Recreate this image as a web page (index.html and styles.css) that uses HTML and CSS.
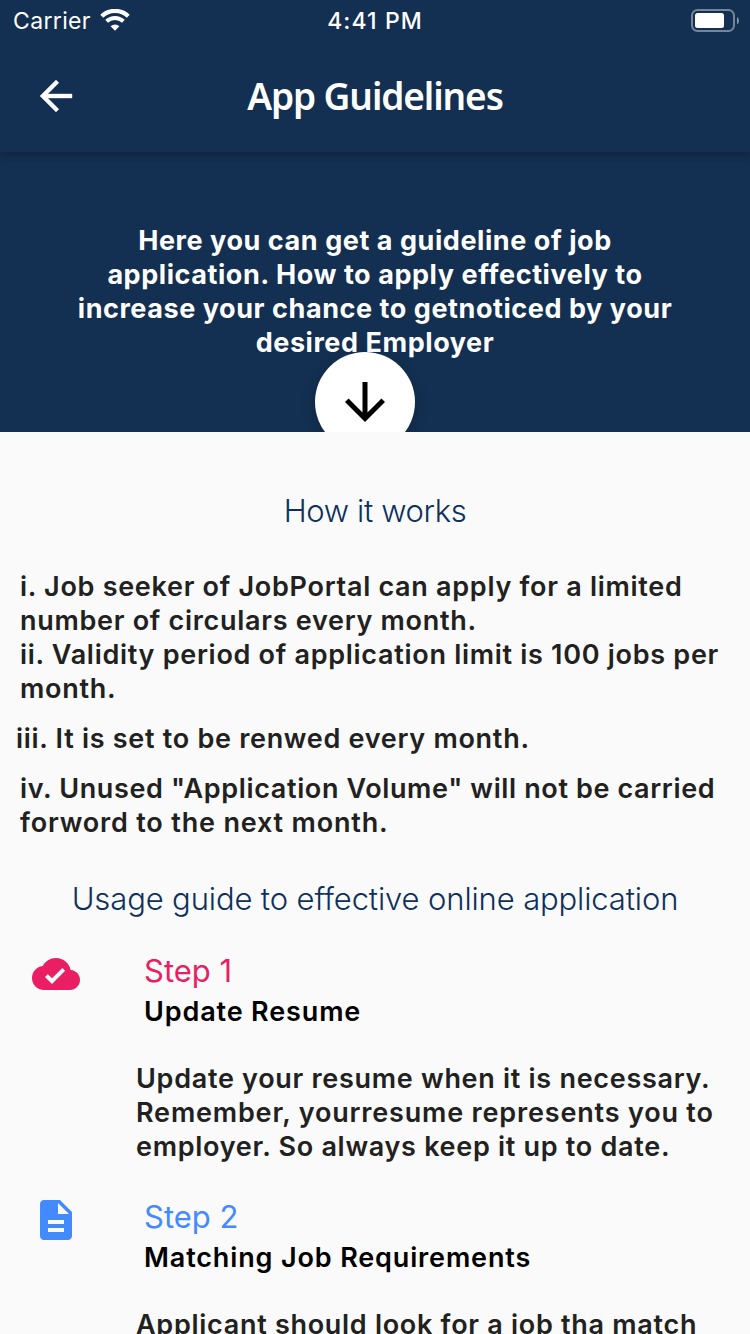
FILE: index.html
```html
<!DOCTYPE html>
<html lang="en">
<head>
<meta charset="utf-8">
<title>App Guidelines</title>
<link rel="stylesheet" href="styles.css">
</head>
<body>
<header class="top">
  <div class="status">
    <div class="carrier"><span>Carrier</span>
      <svg class="wifi" viewBox="0 0 30 22" fill="none" stroke="#fff"><path d="M1.7 7.2A19.3 19.3 0 0 1 28.3 7.2" stroke-width="4.2"/><path d="M6.600 12.3A12.3 12.3 0 0 1 23.4 12.3" stroke-width="4"/><path d="M15 21.7l-4.400-4.400a6.200 6.200 0 0 1 8.800 0z" fill="#fff" stroke="none"/></svg>
    </div>
    <div class="clock">4:41 PM</div>
    <svg class="battery" viewBox="0 0 48 23"><rect x="1" y="1" width="42" height="21" rx="5.5" fill="none" stroke="#fff" stroke-opacity=".42" stroke-width="2"/><rect x="4" y="4" width="29" height="15" rx="2.5" fill="#fff"/><path d="M46 8q2 1 2 3.700t-2 3.700z" fill="#fff" fill-opacity=".5"/></svg>
  </div>
  <div class="appbar">
    <svg class="back" viewBox="0 0 24 24" fill="#fff" stroke="#fff" stroke-width=".2"><path d="M20 11H7.830l5.590-5.590L12 4l-8 8 8 8 1.410-1.410L7.830 13H20v-2z"/></svg>
    <h1 class="title">App Guidelines</h1>
  </div>
</header>
<section class="hero">
  <p class="intro"><span class="line">Here you can get a guideline of job</span><span class="line">application. How to apply effectively to</span><span class="line">increase your chance to getnoticed by your</span><span class="line">desired Employer</span></p>
  <div class="down"><svg viewBox="0 0 24 24"><path d="M20 12l-1.410-1.410L13 16.170V4h-2v12.170l-5.580-5.590L4 12l8 8 8-8z"/></svg></div>
</section>
<main class="content">
  <h2 class="heading works">How it works</h2>
  <div class="rules">
    <p class="rule"><span class="line">i. Job seeker of JobPortal can apply for a limited</span><span class="line">number of circulars every month.</span><span class="line">ii. Validity period of application limit is 100 jobs per</span><span class="line">month.</span></p>
    <p class="rule outdent"><span class="line">iii. It is set to be renwed every month.</span></p>
    <p class="rule"><span class="line tight">iv. Unused "Application Volume" will not be carried</span><span class="line loose">forword to the next month.</span></p>
  </div>
  <h2 class="heading usage">Usage guide to effective online application</h2>
  <div class="step">
    <svg class="icon pink" viewBox="0 0 24 24"><path d="M19.350 10.040C18.670 6.590 15.640 4 12 4 9.110 4 6.600 5.640 5.350 8.040 2.340 8.360 0 10.910 0 14c0 3.310 2.690 6 6 6h13c2.760 0 5-2.240 5-5 0-2.640-2.050-4.780-4.650-4.960zM10 17l-3.500-3.500 1.410-1.410L10 14.170 15.180 9l1.410 1.410L10 17z"/></svg>
    <div class="body">
      <h3 class="number pink">Step 1</h3>
      <h4 class="name">Update Resume</h4>
      <p class="text"><span class="line">Update your resume when it is necessary.</span><span class="line loose">Remember, yourresume represents you to</span><span class="line">employer. So always keep it up to date.</span></p>
    </div>
  </div>
  <div class="step">
    <svg class="icon blue" viewBox="0 0 24 24"><path d="M14 2H6c-1.100 0-1.990.9-1.990 2L4 20c0 1.100.890 2 1.990 2H18c1.100 0 2-.9 2-2V8l-6-6zm2 16H8v-2h8v2zm0-4H8v-2h8v2zm-3-5V3.500L18.500 9H13z"/></svg>
    <div class="body">
      <h3 class="number blue">Step 2</h3>
      <h4 class="name">Matching Job Requirements</h4>
      <p class="text"><span class="line">Applicant should look for a job tha match</span></p>
    </div>
  </div>
</main>
</body>
</html>
```
FILE: styles.css
```css
* { box-sizing: border-box; }
body {
  margin: 0;
  width: 750px;
  height: 1334px;
  overflow: hidden;
  background: #fafafa;
  color: #212121;
  font-family: Inter, "Liberation Sans", sans-serif;
  font-size: 27px;
  line-height: 34px;
}
h1, h2, h3, h4, p { margin: 0; }
svg { display: block; flex: none; }
.line { display: block; white-space: nowrap; }
.tight { letter-spacing: .63px; }
.loose { letter-spacing: .82px; }

.top {
  position: relative;
  height: 152px;
  background: #132f51;
  color: #fff;
  box-shadow: 0 3px 8px rgba(0, 0, 0, .25);
}
.status {
  display: grid;
  grid-template-columns: 1fr auto 1fr;
  align-items: center;
  height: 40px;
  padding: 0 11px 0 13px;
  font-size: 23px;
  letter-spacing: .35px;
}
.carrier { display: flex; align-items: center; gap: 9px; }
.carrier span, .clock { padding-top: 2px; }
.wifi { width: 30px; height: 22px; }
.clock { font-weight: 500; letter-spacing: 1.1px; margin-left: -2px; }
.battery { width: 48px; height: 23px; justify-self: end; }
.appbar {
  display: grid;
  grid-template-columns: 48px 1fr 48px;
  align-items: center;
  height: 112px;
  padding: 0 32px;
}
.back { width: 48px; height: 48px; }
.title {
  text-align: center;
  font: 600 37px/48px "Noto Sans", sans-serif;
  letter-spacing: -1.1px;
}

.hero {
  display: flex;
  flex-direction: column;
  align-items: center;
  height: 280px;
  padding-top: 72px;
  overflow: hidden;
  background: #132f51;
  color: #fff;
}
.intro { height: 128px; text-align: center; font-weight: 700; letter-spacing: .56px; }
.down {
  display: flex;
  flex: none;
  align-items: center;
  justify-content: center;
  width: 100px;
  height: 100px;
  margin-right: 20px;
  border-radius: 50%;
  background: #fff;
  box-shadow: 0 4px 14px rgba(0, 0, 0, .18);
  z-index: 1;
}
.down svg { width: 60px; height: 60px; }

.content { padding-top: 60px; }
.heading {
  text-align: center;
  color: #0d305c;
  font-size: 31px;
  font-weight: 300;
  line-height: 38px;
}
.works { letter-spacing: -.35px; }
.rules {
  display: grid;
  gap: 16px;
  margin: 40px 0 40px 20px;
  font-weight: 600;
  letter-spacing: .71px;
}
.outdent { margin-left: -4px; }
.step { display: flex; gap: 56px; padding-left: 32px; }
.usage { margin-bottom: 32px; letter-spacing: -.13px; }
.step + .step { margin-top: 32px; }
.icon { width: 48px; height: 48px; fill: currentColor; }
.pink { color: #e91e63; }
.blue { color: #448aff; }
.number, .name { padding-left: 8px; }
.number { font-size: 31px; font-weight: 400; line-height: 38px; margin-top: 2px; }
.name { margin: 5px 0 33px; color: #000; font-size: 27px; font-weight: 600; letter-spacing: .86px; }
.text { font-weight: 600; letter-spacing: .71px; }
```
